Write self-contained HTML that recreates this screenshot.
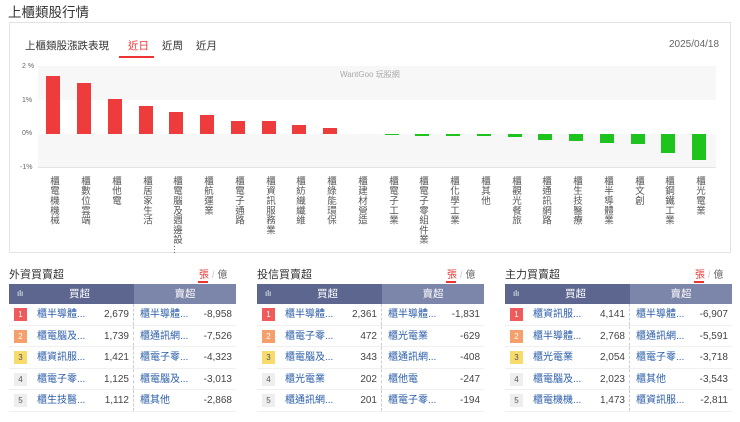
<!DOCTYPE html>
<html><head><meta charset="utf-8"><style>
*{margin:0;padding:0;box-sizing:border-box}
body{width:740px;height:422px;background:#fff;font-family:"Liberation Sans","Noto Sans CJK TC",sans-serif;color:#333;position:relative;overflow:hidden}
.a{position:absolute;white-space:nowrap}
.bar{position:absolute;width:14px}
.r{background:#ee3b3b}.g{background:#1ec31e}
.lb{position:absolute;top:176px;writing-mode:vertical-rl;font-size:9.5px;line-height:12px;letter-spacing:0.3px;color:#555;width:12px}
.tbl{position:absolute;top:284px;width:227px}
.hd{height:20px;display:flex;color:#fff;font-size:10.5px;line-height:20px}
.hd .c1{width:125px;background:#5c668f;position:relative;text-align:center;padding-left:16px}
.hd .c2{flex:1;background:#7c85aa;text-align:center}
.row{height:21.6px;display:flex;border-bottom:1px solid #f0f0f0;font-size:10px;line-height:21px}
.row .l{width:125px;position:relative;border-right:1px dashed #ccc}
.row .rr{flex:1;position:relative}
.bd{position:absolute;left:5px;top:4px;width:13px;height:13px;font-size:8px;line-height:13px;text-align:center;color:#fff}
.nm{position:absolute;left:28px;color:#2a5ca8}
.nr{position:absolute;right:4px;color:#444}
.nm2{position:absolute;left:6px;color:#2a5ca8}
.ttl{position:absolute;top:266px;font-size:11px;color:#333}
.u{position:absolute;top:266px;font-size:10px;color:#666}
</style></head><body>
<div class="a" style="left:8px;top:1px;font-size:13.5px;color:#333">上櫃類股行情</div>
<div class="a" style="left:9px;top:22px;width:722px;height:231px;border:1px solid #e4e4e4"></div>
<div class="a" style="left:25px;top:38px;font-size:10.5px">上櫃類股漲跌表現</div>
<div class="a" style="left:128px;top:38px;font-size:10.5px;color:#e33">近日</div>
<div class="a" style="left:119px;top:56px;width:35px;height:2px;background:#e33"></div>
<div class="a" style="left:162px;top:38px;font-size:10.5px">近周</div>
<div class="a" style="left:196px;top:38px;font-size:10.5px">近月</div>
<div class="a" style="left:669px;top:39px;font-size:10px;color:#666">2025/04/18</div>
<div class="a" style="left:38px;top:66px;width:678px;height:34px;background:#f7f7f7"></div>
<div class="a" style="left:38px;top:134px;width:678px;height:34px;background:#f7f7f7"></div>
<div class="a" style="left:38px;top:167px;width:678px;height:1px;background:#e3e3e3"></div>
<div class="a" style="left:22px;top:63px;font-size:7px;color:#666">2 %</div>
<div class="a" style="left:22px;top:97px;font-size:7px;color:#666">1%</div>
<div class="a" style="left:22px;top:130px;font-size:7px;color:#666">0%</div>
<div class="a" style="left:20px;top:164px;font-size:7px;color:#666">-1%</div>
<div class="a" style="left:340px;top:69px;font-size:8px;color:#aaa">WantGoo 玩股網</div>

<div class="bar r" style="left:46px;top:76px;height:58px"></div>
<div class="bar r" style="left:77px;top:83px;height:51px"></div>
<div class="bar r" style="left:108px;top:99px;height:35px"></div>
<div class="bar r" style="left:139px;top:106px;height:28px"></div>
<div class="bar r" style="left:169px;top:112px;height:22px"></div>
<div class="bar r" style="left:200px;top:115px;height:19px"></div>
<div class="bar r" style="left:231px;top:121px;height:13px"></div>
<div class="bar r" style="left:262px;top:121px;height:13px"></div>
<div class="bar r" style="left:292px;top:125px;height:9px"></div>
<div class="bar r" style="left:323px;top:128px;height:6px"></div>
<div class="bar g" style="left:385px;top:134px;height:1px"></div>
<div class="bar g" style="left:415px;top:134px;height:2px"></div>
<div class="bar g" style="left:446px;top:134px;height:2px"></div>
<div class="bar g" style="left:477px;top:134px;height:2px"></div>
<div class="bar g" style="left:508px;top:134px;height:3px"></div>
<div class="bar g" style="left:538px;top:134px;height:6px"></div>
<div class="bar g" style="left:569px;top:134px;height:7px"></div>
<div class="bar g" style="left:600px;top:134px;height:9px"></div>
<div class="bar g" style="left:631px;top:134px;height:10px"></div>
<div class="bar g" style="left:661px;top:134px;height:19px"></div>
<div class="bar g" style="left:692px;top:134px;height:26px"></div>

<div class="lb" style="left:47px">櫃電機機械</div>
<div class="lb" style="left:78px">櫃數位雲端</div>
<div class="lb" style="left:109px">櫃他電</div>
<div class="lb" style="left:140px">櫃居家生活</div>
<div class="lb" style="left:170px">櫃電腦及週邊設…</div>
<div class="lb" style="left:201px">櫃航運業</div>
<div class="lb" style="left:232px">櫃電子通路</div>
<div class="lb" style="left:263px">櫃資訊服務業</div>
<div class="lb" style="left:293px">櫃紡織纖維</div>
<div class="lb" style="left:324px">櫃綠能環保</div>
<div class="lb" style="left:355px">櫃建材營造</div>
<div class="lb" style="left:386px">櫃電子工業</div>
<div class="lb" style="left:416px">櫃電子零組件業</div>
<div class="lb" style="left:447px">櫃化學工業</div>
<div class="lb" style="left:478px">櫃其他</div>
<div class="lb" style="left:509px">櫃觀光餐旅</div>
<div class="lb" style="left:539px">櫃通訊網路</div>
<div class="lb" style="left:570px">櫃生技醫療</div>
<div class="lb" style="left:601px">櫃半導體業</div>
<div class="lb" style="left:632px">櫃文創</div>
<div class="lb" style="left:662px">櫃鋼鐵工業</div>
<div class="lb" style="left:693px">櫃光電業</div>

<div class="ttl" style="left:9px">外資買賣超</div>
<div class="u" style="left:199px"><span style="color:#e33">張</span> <span style="color:#ccc">/</span> 億</div>
<div class="a" style="left:198px;top:281px;width:10px;height:2px;background:#e33"></div>
<div class="tbl" style="left:9px">
<div class="hd"><div class="c1"><span style="position:absolute;left:8px;font-size:8px">ılı</span>買超</div><div class="c2">賣超</div></div>
<div class="row"><div class="l"><div class="bd" style="background:#f05a5a">1</div><span class="nm">櫃半導體...</span><span class="nr">2,679</span></div><div class="rr"><span class="nm2">櫃半導體...</span><span class="nr">-8,958</span></div></div>
<div class="row"><div class="l"><div class="bd" style="background:#f5a06c">2</div><span class="nm">櫃電腦及...</span><span class="nr">1,739</span></div><div class="rr"><span class="nm2">櫃通訊網...</span><span class="nr">-7,526</span></div></div>
<div class="row"><div class="l"><div class="bd" style="background:#f7dc6c;color:#555">3</div><span class="nm">櫃資訊服...</span><span class="nr">1,421</span></div><div class="rr"><span class="nm2">櫃電子零...</span><span class="nr">-4,323</span></div></div>
<div class="row"><div class="l"><div class="bd" style="background:#eee;color:#555">4</div><span class="nm">櫃電子零...</span><span class="nr">1,125</span></div><div class="rr"><span class="nm2">櫃電腦及...</span><span class="nr">-3,013</span></div></div>
<div class="row"><div class="l"><div class="bd" style="background:#eee;color:#555">5</div><span class="nm">櫃生技醫...</span><span class="nr">1,112</span></div><div class="rr"><span class="nm2">櫃其他</span><span class="nr">-2,868</span></div></div>
</div>

<div class="ttl" style="left:257px">投信買賣超</div>
<div class="u" style="left:447px"><span style="color:#e33">張</span> <span style="color:#ccc">/</span> 億</div>
<div class="a" style="left:446px;top:281px;width:10px;height:2px;background:#e33"></div>
<div class="tbl" style="left:257px">
<div class="hd"><div class="c1"><span style="position:absolute;left:8px;font-size:8px">ılı</span>買超</div><div class="c2">賣超</div></div>
<div class="row"><div class="l"><div class="bd" style="background:#f05a5a">1</div><span class="nm">櫃半導體...</span><span class="nr">2,361</span></div><div class="rr"><span class="nm2">櫃半導體...</span><span class="nr">-1,831</span></div></div>
<div class="row"><div class="l"><div class="bd" style="background:#f5a06c">2</div><span class="nm">櫃電子零...</span><span class="nr">472</span></div><div class="rr"><span class="nm2">櫃光電業</span><span class="nr">-629</span></div></div>
<div class="row"><div class="l"><div class="bd" style="background:#f7dc6c;color:#555">3</div><span class="nm">櫃電腦及...</span><span class="nr">343</span></div><div class="rr"><span class="nm2">櫃通訊網...</span><span class="nr">-408</span></div></div>
<div class="row"><div class="l"><div class="bd" style="background:#eee;color:#555">4</div><span class="nm">櫃光電業</span><span class="nr">202</span></div><div class="rr"><span class="nm2">櫃他電</span><span class="nr">-247</span></div></div>
<div class="row"><div class="l"><div class="bd" style="background:#eee;color:#555">5</div><span class="nm">櫃通訊網...</span><span class="nr">201</span></div><div class="rr"><span class="nm2">櫃電子零...</span><span class="nr">-194</span></div></div>
</div>

<div class="ttl" style="left:505px">主力買賣超</div>
<div class="u" style="left:695px"><span style="color:#e33">張</span> <span style="color:#ccc">/</span> 億</div>
<div class="a" style="left:694px;top:281px;width:10px;height:2px;background:#e33"></div>
<div class="tbl" style="left:505px">
<div class="hd"><div class="c1"><span style="position:absolute;left:8px;font-size:8px">ılı</span>買超</div><div class="c2">賣超</div></div>
<div class="row"><div class="l"><div class="bd" style="background:#f05a5a">1</div><span class="nm">櫃資訊服...</span><span class="nr">4,141</span></div><div class="rr"><span class="nm2">櫃半導體...</span><span class="nr">-6,907</span></div></div>
<div class="row"><div class="l"><div class="bd" style="background:#f5a06c">2</div><span class="nm">櫃半導體...</span><span class="nr">2,768</span></div><div class="rr"><span class="nm2">櫃通訊網...</span><span class="nr">-5,591</span></div></div>
<div class="row"><div class="l"><div class="bd" style="background:#f7dc6c;color:#555">3</div><span class="nm">櫃光電業</span><span class="nr">2,054</span></div><div class="rr"><span class="nm2">櫃電子零...</span><span class="nr">-3,718</span></div></div>
<div class="row"><div class="l"><div class="bd" style="background:#eee;color:#555">4</div><span class="nm">櫃電腦及...</span><span class="nr">2,023</span></div><div class="rr"><span class="nm2">櫃其他</span><span class="nr">-3,543</span></div></div>
<div class="row"><div class="l"><div class="bd" style="background:#eee;color:#555">5</div><span class="nm">櫃電機機...</span><span class="nr">1,473</span></div><div class="rr"><span class="nm2">櫃資訊服...</span><span class="nr">-2,811</span></div></div>
</div>
</body></html>
